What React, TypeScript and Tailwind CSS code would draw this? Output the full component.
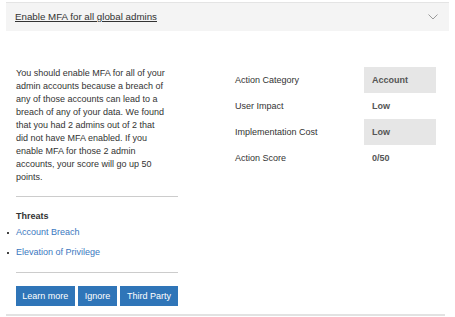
import React from "react";

const rows = [
  { label: "Action Category", value: "Account", shaded: true },
  { label: "User Impact", value: "Low", shaded: false },
  { label: "Implementation Cost", value: "Low", shaded: true },
  { label: "Action Score", value: "0/50", shaded: false },
];

export default function App() {
  return (
    <div className="w-[455px] h-[317px] overflow-hidden bg-white pt-[2px] px-[6px] font-['Liberation_Sans',Arial,sans-serif] text-[#333]">
      <div className="h-[29px] border-t border-[#e4e4e4] bg-[#f4f4f4] flex items-center justify-between pl-[9px] pr-[11px]">
        <span className="text-[9.75px] leading-[12px] underline underline-offset-[1px] text-[#333]">
          Enable MFA for all global admins
        </span>
        <svg width="10" height="6" viewBox="0 0 10 6" className="block">
          <polyline points="0.5,0.5 5,5 9.5,0.5" fill="none" stroke="#9a9a9a" strokeWidth="1" />
        </svg>
      </div>

      <div className="flex mt-[36px]">
        <div className="w-[172px] pl-[10px] shrink-0">
          <p className="w-[152px] text-[9px] leading-[13px]">
            You should enable MFA for all of your admin accounts because a breach of any of those accounts can lead to a breach of any of your data. We found that you had 2 admins out of 2 that did not have MFA enabled. If you enable MFA for those 2 admin accounts, your score will go up 50 points.
          </p>
          <div className="mt-[12px] h-px bg-[#cccccc]" />
          <div className="mt-[13px] text-[9px] leading-[13px] font-bold text-[#333]">Threats</div>
          <ul className="mt-[3px] flex flex-col gap-[7px]">
            {["Account Breach", "Elevation of Privilege"].map((t) => (
              <li key={t} className="relative text-[9px] leading-[13px] text-[#3b78c0]">
                <span className="absolute left-[-9px] top-[6px] w-[2px] h-[2px] bg-[#444]" />
                {t}
              </li>
            ))}
          </ul>
          <div className="mt-[13px] h-px bg-[#cccccc]" />
          <div className="mt-[13px] flex gap-[3px]">
            <button className="w-[61px] h-[20px] bg-[#2f75b8] text-white text-[9px] leading-[20px] text-center">Learn more</button>
            <button className="w-[41px] h-[20px] bg-[#2f75b8] text-white text-[9px] leading-[20px] text-center">Ignore</button>
            <button className="w-[60px] h-[20px] bg-[#2f75b8] text-white text-[9px] leading-[20px] text-center">Third Party</button>
          </div>
        </div>

        <div className="ml-[57px] flex flex-col">
          {rows.map((r) => (
            <div key={r.label} className="flex h-[26px]">
              <div className="w-[129px] flex items-center pt-[1px] text-[9px] text-[#333]">{r.label}</div>
              <div className={`w-[72px] flex items-center pt-[1px] pl-[8px] text-[9px] font-bold text-[#555] ${r.shaded ? "bg-[#e6e6e6]" : ""}`}>
                {r.value}
              </div>
            </div>
          ))}
        </div>
      </div>

      <div className="mt-[8px] h-[2px] bg-[#e2e2e2] w-[439px]" />
    </div>
  );
}
